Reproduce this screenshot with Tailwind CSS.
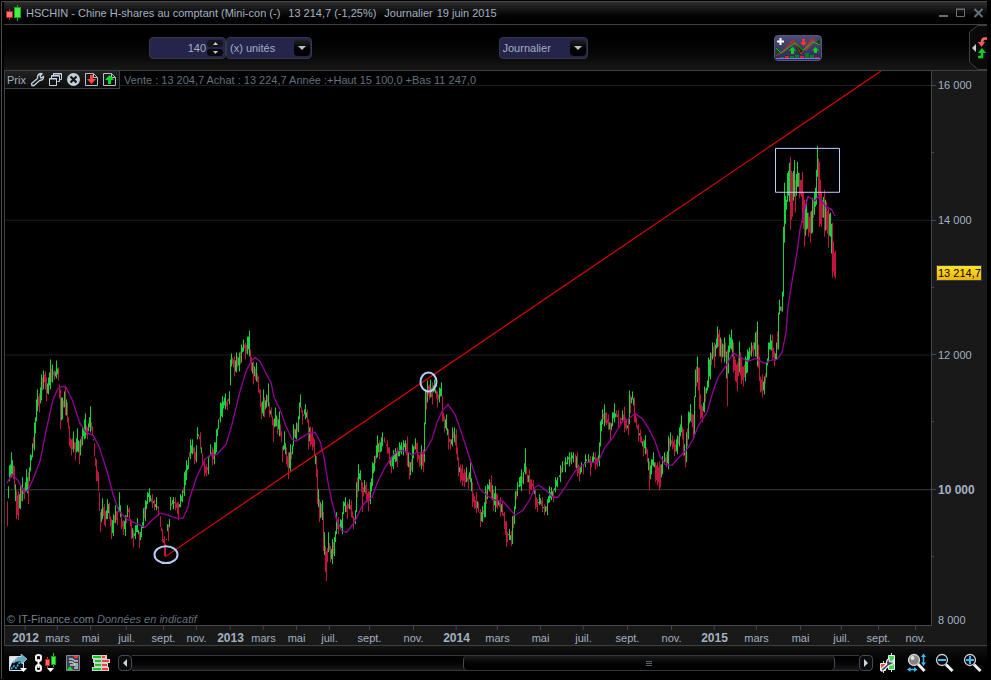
<!DOCTYPE html>
<html lang="fr">
<head>
  <meta charset="UTF-8" />
  <meta name="viewport" content="width=device-width, initial-scale=1.0"/>
  <title>HSCHIN - Chine H-shares au comptant</title>
  <script src="https://cdn.jsdelivr.net/npm/@tailwindcss/browser@4"></script>
</head>
<body class="bg-black font-['Liberation_Sans',Arial,sans-serif] text-[11px] leading-4 text-[#a3b1c1]">

  <main class="flex h-screen flex-col border-y border-black pr-1 pl-px">
    <div class="flex min-h-0 flex-1 flex-col border-t border-l border-[#4c4848] pl-[2px]">

      <!-- Title bar -->
      <header class="flex h-[23px] shrink-0 items-center border-b border-[#3a4147] bg-linear-to-b from-[#2e2e2e] to-black pr-[2px] pl-[2px]">
        <svg class="h-4 w-4 shrink-0" viewBox="0 0 16 16" aria-hidden="true">
          <path d="M3.500 4V15" stroke="#c22" />
          <rect x=".5" y="6.500" width="6" height="6" fill="#f77" stroke="#b22" />
          <path d="M11.500 0V16" stroke="#1b1" />
          <rect x="8.500" y="2.500" width="6" height="10" fill="#4e4" stroke="#1a1" />
        </svg>
        <h1 class="ml-1 flex gap-2 whitespace-nowrap">
          <span>HSCHIN - Chine H-shares au comptant (Mini-con (-)</span>
          <span>13 214,7 (-1,25%)</span>
          <span class="flex gap-1"><span>Journalier</span> <span>19 juin 2015</span></span>
        </h1>
        <div class="ml-auto flex items-center gap-[6px]">
          <button aria-label="Réduire"><svg class="h-3 w-3" viewBox="0 0 12 12"><path d="M2 9h9" stroke="#66707a" stroke-width="2" /></svg></button>
          <button aria-label="Agrandir"><svg class="h-3 w-3" viewBox="0 0 12 12"><path d="M1.500 2.500h8v7h-8zM1 2h9" fill="none" stroke="#66707a" /></svg></button>
          <button aria-label="Fermer"><svg class="h-3 w-3" viewBox="0 0 12 12"><path d="M1.500 2l8 8M9.500 2l-8 8" stroke="#66707a" stroke-width="2" /></svg></button>
        </div>
      </header>

      <!-- Toolbar -->
      <div class="flex h-[46px] shrink-0 items-center border-b border-[#3a4147] bg-linear-to-b from-black to-[#171717]">
        <div class="mr-[147px] ml-[145px] flex flex-1 items-center justify-between">
          <div class="flex">
            <div class="flex h-[22px] w-[77px] items-center rounded border border-[#34383f] bg-[#25244a] pr-[2px]">
              <input type="text" value="140" aria-label="Nombre d'unités" class="min-w-0 flex-1 bg-transparent text-right outline-none" />
              <div class="flex flex-col gap-[2px] pl-[1px]">
                <button aria-label="Plus" class="flex h-[7px] w-4 items-center justify-center rounded-sm bg-[#15151c]"><svg class="h-[3px] w-[5px]" viewBox="0 0 5 3"><path d="M0 3L2.500 0L5 3z" fill="#c3ccd6" /></svg></button>
                <button aria-label="Moins" class="flex h-[7px] w-4 items-center justify-center rounded-sm bg-[#08080a]"><svg class="h-[3px] w-[5px]" viewBox="0 0 5 3"><path d="M0 0L2.500 3L5 0z" fill="#c3ccd6" /></svg></button>
              </div>
            </div>
            <div class="relative">
              <select aria-label="Type d'unités" class="block h-[22px] w-[86px] appearance-none rounded border border-[#34383f] bg-[#25244a] pl-[3px]">
                <option>(x) unités</option>
              </select>
              <span class="pointer-events-none absolute top-[3px] right-[2px] flex h-4 w-4 items-center justify-center rounded-sm bg-linear-to-b from-[#202020] to-black"><svg class="h-1 w-2" viewBox="0 0 8 4"><path d="M0 0h8L4 4z" fill="#b3c0cc" /></svg></span>
            </div>
          </div>
          <div class="relative">
            <select aria-label="Période" class="block h-[22px] w-[89px] appearance-none rounded border border-[#34383f] bg-[#25244a] pl-[3px]">
              <option>Journalier</option>
            </select>
            <span class="pointer-events-none absolute top-[3px] right-[2px] flex h-4 w-4 items-center justify-center rounded-sm bg-linear-to-b from-[#202020] to-black"><svg class="h-1 w-2" viewBox="0 0 8 4"><path d="M0 0h8L4 4z" fill="#b3c0cc" /></svg></span>
          </div>
          <button aria-label="Ajouter un indicateur" class="h-[26px] w-12 overflow-hidden rounded-sm border border-[#565678] bg-linear-to-b from-[#4c4c78] to-[#2b2b50]">
            <svg class="h-6 w-full" viewBox="0 0 46 24">
              <path d="M1 11L6 16L1 19z" fill="#054a1c" />
              <path d="M6 17L18 4L24 9L18 8L8 17z" fill="#7c3a3e" />
              <path d="M20 8L25 11L29 13L25 19L21 13z" fill="#043a18" />
              <path d="M29 13L36 3L41 5L38 8L31 15z" fill="#8a4444" />
              <path d="M40 7L45 3V10z" fill="#054a1c" />
              <path d="M1 19.500L6 17L18 4L26 18L37 2.500L44 9" fill="none" stroke="#d22" />
              <path d="M1 12L6 17L20 7L28 14L38 6L45 9" fill="none" stroke="#1b2" />
              <path d="M17.500 11L21 14.500H19V18H16V14.500H14zM40.500 11L44 14.500H42V17H39V14.500H37z" fill="#1c2" />
              <path d="M27 3h3v3.500h2L28.500 10L25 6.500h2z" fill="#f33" />
              <path d="M5.500 2v7M2 5.500h7" stroke="#fff" stroke-width="2" />
              <path d="M5 22v-1h4v1M15 22v-2h4v2M20 22v-3h4v3M30 22v-5h4v5M35 22v-3h4v3" fill="#173" />
              <path d="M10 22v-2h4v2M25 22v-2h4v2M40 22v-1h4v1" fill="#d22" />
              <path d="M1 22.500h44" stroke="#77f" />
            </svg>
          </button>
        </div>
        <button aria-label="Ouvrir le panneau latéral" class="h-[45px] w-[18px] shrink-0">
          <svg class="h-full w-full" viewBox="0 0 18 45">
            <path d="M18 .5H9L.500 7V37L9 44.500H18" fill="#0a0a0a" stroke="#3a4147" />
            <path d="M7 19v8l-4-4z" fill="#c5d0dc" />
            <path d="M18 13.500h-2q-3 0-3 4" fill="none" stroke="#f66" stroke-width="2.500" />
            <path d="M9 17h7l-3.500 5z" fill="#f55" />
            <path d="M13 27v5h-4" fill="none" stroke="#1c2" stroke-width="2.500" />
            <path d="M9 28h8l-4-5z" fill="#1c2" />
          </svg>
        </button>
      </div>

      <!-- Chart -->
      <section class="flex min-h-0 flex-1 border-l border-[#3a4147] bg-[#191919]">
        <div class="relative min-w-0 flex-1 border-r border-[#44484e] bg-black">
          <svg id="chart" class="absolute inset-0 h-full w-full" viewBox="5 71 926 555" preserveAspectRatio="none" fill="none">
            <g shape-rendering="crispEdges">
              <path d="M5 85.500H931M5 220.500H931M5 355.500H931" stroke="#1e1e1e" />
              <path d="M5 490.500H931" stroke="#3b3b3b" />
              <path id="down" stroke="#c3143f" />
              <path id="up" stroke="#10d540" />
            </g>
            <path id="average" stroke="#960096" stroke-width="1.300" />
            <path d="M166 557L881 71" stroke="#e00000" stroke-width="1.200" />
            <g stroke="#b9c9f8" stroke-width="2">
              <ellipse cx="166" cy="555.500" rx="11.500" ry="8.500" />
              <ellipse cx="428.500" cy="382.500" rx="8" ry="9.500" />
            </g>
            <path d="M775.500 148.500h64v44h-64z" stroke="#c0ccff" shape-rendering="crispEdges" />
          </svg>

          <div class="relative flex items-start">
            <div class="flex h-[18px] items-center gap-[3px] border-r border-b border-[#3a4147] bg-linear-to-b from-[#222] to-[#0c0c0c] pr-[2px] pl-[2px]">
              <span class="mr-px">Prix</span>
              <button aria-label="Réglages"><svg class="h-[15px] w-[15px]" viewBox="0 0 15 15"><path d="M2 13.500L1.500 11.500L7.500 6.500Q7 2 11 1.500L12 2L10 4L11 6L13.500 4.500Q14 8 9.500 8.500L4 13.500z" fill="none" stroke="#c8d4e2" stroke-width="1.300" /></svg></button>
              <button aria-label="Dupliquer"><svg class="h-[15px] w-[15px]" viewBox="0 0 15 15"><path d="M5.500 4.500v-3h8v6h-2M3.500 6.500v-3h8v6h-2M1.500 6.500h7v7h-7z" fill="none" stroke="#c8d4e2" /><path d="M5 2h9M3 4h9M1 7h8" stroke="#c8d4e2" /></svg></button>
              <button aria-label="Fermer le graphique"><svg class="h-[15px] w-[15px]" viewBox="0 0 15 15"><circle cx="7.500" cy="7.500" r="6.500" fill="#c3cfdd" /><path d="M4.500 4.500l6 6M10.500 4.500l-6 6" stroke="#151515" stroke-width="2.200" /></svg></button>
              <button aria-label="Descendre"><svg class="h-[15px] w-[15px]" viewBox="0 0 15 15"><path d="M9.500 1.500h-8v12h12v-8zM9.500 1.500v4h4" fill="none" stroke="#b9bfc8" /><path d="M6 3h3v4h3L7.500 12L3 7h3z" fill="#f44" /></svg></button>
              <button aria-label="Monter"><svg class="h-[15px] w-[15px]" viewBox="0 0 15 15"><path d="M9.500 1.500h-8v12h12v-8zM9.500 1.500v4h4" fill="none" stroke="#b9bfc8" /><path d="M6 12h3V8h3L7.500 3L3 8h3z" fill="#0d2" /></svg></button>
            </div>
            <p class="pt-[1px] pl-1 text-[#64717e]">Vente : 13 204,7 Achat : 13 224,7 Année :+Haut 15 100,0 +Bas 11 247,0</p>
          </div>

          <p class="absolute bottom-[-3px] left-[2px] pb-px text-[#71808e]">© IT-Finance.com <em class="text-[#62707e]">Données en indicatif</em></p>
        </div>
        <div id="prices" class="relative w-[55px] shrink-0">
          <output class="absolute top-[35%] left-1 border border-[#343c48] bg-linear-to-b from-[#ffe22a] to-[#efb500] pl-px leading-[14px] text-black">13 214,7</output>
        </div>
      </section>

      <!-- Time axis -->
      <div class="flex h-[21px] shrink-0 border-b border-l border-[#3a4147] bg-[#191919]">
        <div id="dates" class="relative flex-1 border-t border-[#44484e]"></div>
        <div class="w-[55px]"></div>
      </div>

      <!-- Bottom bar -->
      <footer class="flex shrink-0 items-center bg-linear-to-b from-[#121212] to-black pt-[7px] pr-1 pb-[6px] pl-[5px]">
        <button aria-label="Exporter" class="mr-[6px]"><svg class="h-[18px] w-[19px]" viewBox="0 0 19 18"><path d="M.5 2.500h14v14h-14z" fill="#0c1218" stroke="#d8dfe6" /><path d="M1 3h8L3 9L1 14z" fill="#dfe8ee" /><path d="M2 15L5 12L7 14L11 8L14 9" fill="none" stroke="#39c8ff" stroke-dasharray="2 1" stroke-width="1.500" /><path d="M4 9Q6 3 12 3V0l6 5l-5 5V7Q8 6 4 9z" fill="#62a9c6" stroke="#bfe4f1" stroke-width=".6" /><path d="M11 14h7l-3.500 4z" fill="#fff" /></svg></button>
        <button aria-label="Lier" class="mr-[10px]"><svg class="h-5 w-[22px]" viewBox="0 0 22 20"><path d="M2 7.500V3.500Q2 2 4.500 2T7 3.500V5.500Q7 8 4.500 8T2 5.500M2 14.500V16Q2 18 4.500 18T7 16V14.500Q7 12 4.500 12T2 14.500" fill="none" stroke="#f2f2f2" stroke-width="2" /><path d="M4.500 6v9" stroke="#f2f2f2" stroke-width="2" /><path d="M13.500 4v11" stroke="#d33" /><path d="M11.500 6.500h4v6h-4z" fill="#f66" stroke="#b22" /><path d="M19.500 0v14" stroke="#1c2" /><path d="M17.500 3.500h4v8h-4z" fill="#4e4" stroke="#1a2" /><path d="M13 15h7l-3.500 4z" fill="#fff" /></svg></button>
        <button aria-label="Carnet" class="mr-[11px]"><svg class="h-4 w-[15px]" viewBox="0 0 15 16"><path d="M.5.5h13v15H.5z" fill="#3a4350" stroke="#848b93" /><path d="M3 4h3l3 2h3M3 7h3l3 2h3M4 10h4l2 1h2M8 13h4" fill="none" stroke="#c3c9d1" stroke-width="1.300" /><path d="M7 1h6l-3 3z" fill="#f33" /><path d="M1 15h6l-3-4z" fill="#1d2" /></svg></button>
        <button aria-label="Ordres" class="mr-2"><svg class="h-[18px] w-[18px]" viewBox="0 0 18 18"><path d="M0 1h15v4h3v4h-2v4h1v4H0v-4h2V9h-1V5H0z" fill="#d0d0d0" /><path d="M1 2h8v2H1zM3 6h6v2H3zM3 10h6v2H3zM1 14h8v2H1z" fill="#12c81d" /><path d="M10 2h3v2h-3zM10 6h7v2h-7zM10 10h5v2h-5zM10 14h6v2h-6z" fill="#f43e3e" /></svg></button>

        <!-- Scroll bar -->
        <div class="flex min-w-0 flex-1 items-center">
          <button aria-label="Défiler à gauche" class="flex h-4 w-[14px] shrink-0 items-center justify-center rounded-sm border border-[#454b52] bg-[#0b0b0b]"><svg class="h-2 w-1" viewBox="0 0 4 8"><path d="M4 0v8L0 4z" fill="#cbd4de" /></svg></button>
          <div class="flex h-4 min-w-0 flex-1 border-y border-[#33393e] bg-linear-to-b from-black to-[#191919]">
            <div class="w-[45.500%]"></div>
            <div class="flex w-[51.200%] items-center justify-center rounded border-x border-[#454b52] bg-linear-to-b from-[#1b1b1b] to-black">
              <svg class="h-[5px] w-[6px]" viewBox="0 0 6 5"><path d="M0 .5h6M0 2.500h6M0 4.500h6" stroke="#59616a" /></svg>
            </div>
          </div>
          <button aria-label="Défiler à droite" class="flex h-4 w-[14px] shrink-0 items-center justify-center rounded-sm border border-[#454b52] bg-[#0b0b0b]"><svg class="h-2 w-1" viewBox="0 0 4 8"><path d="M0 0v8L4 4z" fill="#cbd4de" /></svg></button>
        </div>

        <button aria-label="Style du graphique" class="ml-[7px]"><svg class="h-5 w-[17px]" viewBox="0 0 17 20"><path d="M3.500 8v12M11.500 0v19" stroke="#ddd" /><path d="M.5 10.500h5v7h-5z" fill="#e44" stroke="#eee" /><path d="M8.500 2.500h6v14h-6z" fill="#48d458" stroke="#cfe" /><path d="M1.500 18L1 16L6.500 11.500Q6 7 9 5.500L9.500 8.500L12 9L14 6.500Q14.500 12 9 12.500L4 17.500z" fill="#445" stroke="#f4f4f4" stroke-width="1.200" /></svg></button>
        <button aria-label="Zoom automatique" class="ml-[10px]"><svg class="h-5 w-5" viewBox="0 0 20 20"><path d="M11 11l6.500 7" stroke="#eee" stroke-width="3" /><circle cx="7" cy="7" r="5.500" fill="#858585" stroke="#d5d5d5" stroke-width="1.300" /><circle cx="5.500" cy="5" r="2" fill="#e2e2e2" /><path d="M16.500 3v8M2 16.500h7" stroke="#3bbcf5" stroke-width="1.500" /><path d="M14 4l2.500-3.500L19 4zM14 9.500l2.500 3.500L19 9.500zM3.500 14L0 16.500L3.500 19zM7 14l3.500 2.500L7 19z" fill="#3bbcf5" /></svg></button>
        <button aria-label="Zoom arrière" class="ml-2"><svg class="h-5 w-5" viewBox="0 0 20 20"><path d="M11 11.500l6.500 6.500" stroke="#eee" stroke-width="3" /><circle cx="7" cy="7" r="5.500" fill="#05080c" stroke="#ccd2d8" stroke-width="1.300" /><path d="M3 7h8" stroke="#3bbcf5" stroke-width="2" /></svg></button>
        <button aria-label="Zoom avant" class="ml-2"><svg class="h-5 w-5" viewBox="0 0 20 20"><path d="M11 11.500l6.500 6.500" stroke="#eee" stroke-width="3" /><circle cx="7" cy="7" r="5.500" fill="#05080c" stroke="#ccd2d8" stroke-width="1.300" /><path d="M3 7h8M7 3v8" stroke="#3bbcf5" stroke-width="2" /></svg></button>
      </footer>
    </div>
  </main>

  <script>
    // x, high, low
    const bars = `7 502 527,9 466 482,11 453 478,14 467 490,16 491 520,18 492 521,20 486 510,22 478 502,24 488 500,26 470 492,28 473 505,30 455 472,32 444 458,34 423 451,36 400 422,37 390 412,39 394 413,41 375 401,43 371 390,45 372 390,46 378 402,48 378 395,50 360 390,52 365 383,54 371 380,56 361 379,58 368 381,60 390 430,62 398 420,64 392 408,65 386 416,67 403 423,69 427 447,71 440 456,73 432 453,75 443 461,77 429 452,79 442 465,82 428 446,84 420 440,85 414 439,87 428 440,90 407 433,92 427 436,94 444 457,96 460 482,98 473 492,99 493 512,100 513 533,102 499 520,104 505 526,105 512 528,107 500 520,109 503 520,111 520 540,113 515 537,115 506 524,117 512 526,119 493 512,121 513 530,123 521 536,125 516 537,127 506 518,129 508 520,131 521 540,133 531 548,135 526 540,137 519 533,139 533 549,141 526 538,143 509 529,145 501 522,147 493 505,149 489 503,152 495 509,154 500 511,156 498 511,158 507 517,160 517 528,162 530 543,164 537 557,165 545 558,167 525 532,168 525 542,169 520 528,170 498 511,173 498 510,175 498 511,177 503 515,178 503 521,180 495 508,182 491 503,184 473 497,186 461 481,188 458 470,190 440 460,192 440 455,194 448 465,196 446 463,197 428 440,200 433 450,202 454 466,204 460 477,206 465 477,208 458 475,210 445 455,212 448 466,214 443 465,216 430 453,218 420 430,220 403 423,222 397 418,225 394 410,227 400 411,229 392 405,230 360 386,231 354 367,234 357 377,236 353 373,239 353 372,241 345 363,243 340 352,245 343 360,247 337 355,249 331 357,251 358 372,253 362 385,256 363 382,258 377 393,260 390 408,261 403 420,263 390 417,264 398 418,266 395 408,268 384 407,269 403 418,271 408 418,273 420 443,275 408 427,277 418 435,279 412 437,281 432 443,282 447 463,284 432 450,286 448 465,288 453 480,290 445 472,292 446 455,293 425 447,296 423 440,298 417 433,299 403 420,300 395 408,302 411 425,305 405 420,307 410 423,308 420 450,310 427 447,312 428 451,314 440 457,316 457 478,317 470 505,319 500 523,322 501 521,323 513 552,325 547 573,326 552 582,328 533 553,330 547 563,332 540 565,334 538 557,336 513 535,338 518 535,340 520 530,342 513 535,343 502 515,345 498 513,347 503 520,349 500 510,351 501 518,353 517 530,355 511 525,356 483 513,358 465 492,360 471 481,362 483 513,364 481 493,366 483 503,368 492 512,370 483 505,372 463 487,374 457 472,377 436 458,379 441 460,381 438 452,382 433 447,384 438 443,387 441 455,389 448 465,391 457 474,393 451 470,395 449 463,397 448 468,399 443 457,401 443 455,403 441 456,405 441 453,407 437 467,409 462 480,410 463 476,412 445 473,415 439 450,417 443 463,419 456 468,421 446 470,423 450 473,424 423 463,425 390 425,427 381 403,429 385 400,430 380 398,432 383 405,434 380 392,437 392 408,439 388 403,441 383 397,442 397 422,444 417 433,446 415 431,448 430 450,450 440 450,452 428 447,454 428 443,456 430 455,458 458 477,460 465 483,462 465 487,464 470 488,466 468 483,468 475 490,470 463 483,472 483 508,474 497 510,476 493 514,478 503 513,480 510 528,482 507 523,484 503 518,485 487 518,487 485 500,489 480 492,491 476 500,493 490 512,495 487 513,497 495 510,500 498 517,502 503 516,504 513 530,506 522 548,507 533 543,509 530 541,511 532 547,512 517 545,514 507 525,515 492 510,517 483 497,519 478 488,521 470 492,523 473 485,525 449 475,527 475 483,529 470 495,531 480 491,533 481 493,535 490 510,537 500 513,539 495 506,542 498 513,544 505 516,547 500 516,549 487 503,551 488 501,553 490 503,555 478 493,557 478 488,560 466 483,562 462 473,565 458 473,567 457 465,569 453 467,571 453 465,573 453 463,575 455 468,577 453 477,579 467 482,581 463 473,583 465 475,585 455 468,588 455 463,590 457 477,593 453 463,595 453 470,597 458 468,599 443 467,600 422 447,602 410 425,604 405 427,606 413 426,608 415 431,610 423 442,612 413 427,614 404 423,616 411 418,618 411 428,620 418 426,622 411 423,624 407 433,626 421 431,628 418 436,629 391 425,632 392 400,634 398 423,636 418 428,638 425 442,640 430 443,643 440 457,645 436 455,647 450 463,649 462 491,651 460 475,653 453 467,655 463 483,657 463 486,659 462 491,660 465 488,662 457 475,664 453 463,666 455 468,668 437 470,670 433 447,672 436 450,674 440 457,677 436 455,679 428 447,681 416 433,683 430 457,685 453 468,686 433 463,688 412 440,690 405 422,693 415 438,694 397 437,695 370 398,697 357 383,699 368 410,700 395 420,702 407 423,704 387 413,707 381 391,708 358 388,710 353 380,712 343 360,714 343 368,715 345 357,717 327 348,719 330 357,721 340 363,724 338 363,725 343 358,727 350 407,729 335 353,731 330 350,733 343 373,735 360 382,737 363 392,739 342 373,741 357 385,743 367 387,745 357 382,747 350 373,749 348 360,751 343 357,753 343 357,755 333 357,757 322 367,759 357 382,760 377 393,762 375 398,764 377 395,766 363 378,768 343 363,770 335 350,772 335 360,774 352 367,776 343 360,778 313 350,779 300 315,781 307 312,782 292 312,783 227 297,784 183 243,786 200 210,787 173 202,789 163 202,790 157 230,792 173 217,794 160 197,795 180 213,797 162 187,799 173 198,801 180 197,802 172 223,804 200 247,806 200 230,808 213 237,810 212 243,812 198 233,814 193 215,816 170 205,817 146 177,819 162 227,821 192 227,823 197 218,824 190 237,826 202 230,828 207 248,830 213 237,832 223 278,834 253 277,835 251 279`
      .split(',').map(b => b.split(' ').map(Number));

    const average = '7 484 12 475 18 481 24 493 28 491 33 480 40 462 46 432 53 400 58 389 62 387 66 388 72 400 80 424 86 433 93 436 99 447 107 472 113 495 119 512 127 520 133 523 140 526 145 528 152 521 160 514 168 516 176 519 183 519 188 508 190 498 197 477 205 460 210 456 217 455 226 445 232 425 240 392 246 372 251 362 255 358 260 362 265 372 271 383 274 398 280 410 286 427 292 440 296 442 302 438 310 433 315 433 320 442 324 458 328 483 332 503 337 522 342 532 347 533 355 522 362 507 367 501 372 498 378 482 385 468 392 457 398 451 407 452 412 456 417 453 424 454 432 440 437 423 442 412 448 405 455 415 462 435 470 460 480 490 488 497 495 501 503 502 510 510 515 516 523 511 530 500 535 488 539 486 547 492 553 498 558 498 565 488 575 472 580 467 588 463 598 463 605 448 613 438 623 421 628 420 635 414 642 419 648 428 655 442 660 457 665 465 672 466 680 457 687 450 693 440 698 427 707 413 713 392 718 378 727 365 733 353 739 357 748 362 755 359 765 364 770 361 777 360 782 353 786 333 788 307 792 282 797 253 800 230 805 208 808 197 815 201 818 197 823 203 827 208 831 209 835 216';

    let up = '';
    let down = '';
    bars.forEach(([x, high, low], i) => {
      const [px, ph, pl] = bars[i - 1] || [x, high - 1, low - 1];
      const rising = high + low < ph + pl;
      const bar = `M${x + 0.5} ${high}V${low}`;
      if (rising) up += bar; else down += bar;
      // columns between two listed sessions
      for (let c = px + 1; c < x; c++) {
        const t = (c - px) / (x - px);
        const top = Math.round(ph + (high - ph) * t + 3 + c % 4);
        const end = Math.round(pl + (low - pl) * t - 3 - c % 5);
        if (end <= top) continue;
        const fill = `M${c + 0.5} ${top}V${end}`;
        if (c % 3 < 1 ? !rising : rising) up += fill; else down += fill;
      }
    });
    document.getElementById('up').setAttribute('d', up);
    document.getElementById('down').setAttribute('d', down);
    document.getElementById('average').setAttribute('d', 'M' + average);

    const prices = document.getElementById('prices');
    [[85, '16 000'], [152], [220, '14 000'], [287], [355, '12 000'], [422], [490, '10 000'], [557], [620, '8 000']].forEach(([y, text]) => {
      const row = document.createElement('div');
      row.className = 'absolute left-0 flex h-4 -translate-y-1/2 items-center gap-[2px] whitespace-nowrap';
      row.style.top = `${(y - 70.5) / 5.55}%`;
      const tick = y === 620 ? 'w-1' : text ? 'h-px w-1 bg-[#44484e]' : 'h-px w-[2px] bg-[#44484e]';
      row.innerHTML = `<i class="${tick}"></i><span class="${y === 490 ? 'text-xs font-bold' : ''}">${text || ''}</span>`;
      prices.appendChild(row);
    });

    const dates = document.getElementById('dates');
    const months = ['mars', 'mai', 'juil.', 'sept.', 'nov.'];
    [25, 57, 90, 126, 163, 196, 230, 263, 296, 329, 369, 413, 456, 497, 540, 583, 627, 671, 714, 756, 800, 841, 878, 915].forEach((x, i) => {
      const label = document.createElement('div');
      const year = i % 6 === 0;
      label.className = 'absolute top-0 flex -translate-x-1/2 flex-col items-center';
      label.style.left = `${(x - 4.5) / 9.27}%`;
      label.innerHTML = `<i class="h-1 w-px bg-[#44484e]"></i><span class="${year ? 'text-xs leading-4 font-bold' : ''}">${year ? 2012 + i / 6 : months[i % 6 - 1]}</span>`;
      dates.appendChild(label);
    });
  </script>

</body>
</html>
